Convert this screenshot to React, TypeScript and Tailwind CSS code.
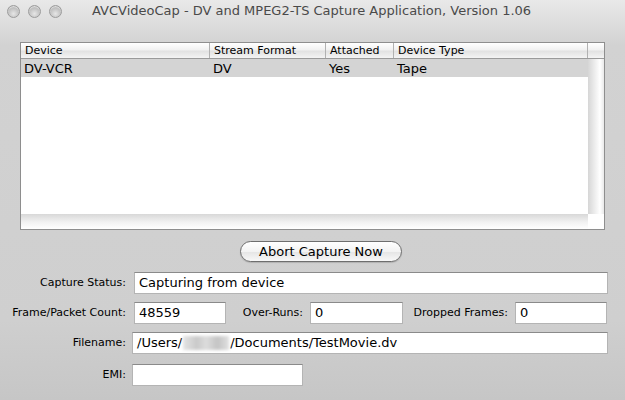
import type { ReactNode } from "react";

const font = "font-['Lucida_Grande','DejaVu_Sans',sans-serif]";

function Light() {
  return (
    <span className="w-[13px] h-[13px] rounded-full border border-[#9c9c9c] bg-[radial-gradient(circle_at_50%_70%,#e6e6e6_0%,#c2c2c2_55%,#a9a9a9_100%)] shadow-[inset_0_1px_1px_rgba(255,255,255,0.6)]" />
  );
}

function Field({ children, className }: { children?: ReactNode; className: string }) {
  return (
    <div
      className={`h-[22px] bg-white border border-[#b4b4b4] border-t-[#8a8a8a] flex items-center px-[4px] text-[13px] text-black whitespace-nowrap ${className}`}
    >
      {children}
    </div>
  );
}

const header = [
  { label: "Device", w: "w-[189px]" },
  { label: "Stream Format", w: "w-[116px]" },
  { label: "Attached", w: "w-[68px]" },
  { label: "Device Type", w: "w-[194px]" },
];

export default function App() {
  return (
    <div
      className={`w-[625px] h-[400px] overflow-hidden bg-[linear-gradient(to_bottom,#e9e9e9_0px,#d2d2d2_45px,#cfcfcf_320px,#c6c6c6_400px)] ${font} text-black`}
    >
      {/* Title bar */}
      <div className="h-[22px] flex items-center">
        <div className="flex gap-[8px] pl-[7px]">
          <Light />
          <Light />
          <Light />
        </div>
        <span className="ml-[30px] text-[13px] text-[#4a4a4a] whitespace-nowrap">
          AVCVideoCap - DV and MPEG2-TS Capture Application, Version 1.06
        </span>
      </div>

      {/* Device table */}
      <div className="ml-[20px] mt-[20px] w-[585px] h-[188px] border border-[#8e8e8e] bg-white flex flex-col">
        <div className="h-[16px] flex border-b border-[#9a9a9a] bg-[linear-gradient(to_bottom,#ffffff,#f1f1f1_45%,#e2e2e2_55%,#f4f4f4)]">
          {header.map((h) => (
            <div
              key={h.label}
              className={`${h.w} border-r border-[#b1b1b1] pl-[4px] text-[11px] leading-[15px] whitespace-nowrap`}
            >
              {h.label}
            </div>
          ))}
          <div className="flex-1" />
        </div>
        <div className="flex flex-1">
          <div className="flex-1 flex flex-col">
            <div className="h-[18px] flex bg-[#d4d4d4] text-[13px] leading-[19px]">
              <div className="w-[189px] pl-[3px]">DV-VCR</div>
              <div className="w-[116px] pl-[3px]">DV</div>
              <div className="w-[68px] pl-[3px]">Yes</div>
              <div className="pl-[3px]">Tape</div>
            </div>
          </div>
          <div className="w-[16px] bg-[linear-gradient(to_right,#d6d6d6,#f4f4f4_55%,#ffffff_75%,#e9e9e9)]" />
        </div>
        <div className="h-[15px] flex">
          <div className="flex-1 bg-[linear-gradient(to_bottom,#d8d8d8,#f2f2f2_55%,#ffffff)]" />
          <div className="w-[16px] bg-white" />
        </div>
      </div>

      {/* Button */}
      <div className="mt-[9px] ml-[240px]">
        <button className="w-[162px] h-[21px] rounded-full border border-[#6e6e6e] bg-[linear-gradient(to_bottom,#ffffff,#f3f3f3_50%,#e6e6e6_55%,#f8f8f8)] text-[13px] leading-[19px] text-black shadow-[0_1px_1px_rgba(0,0,0,0.15)]">
          Abort Capture Now
        </button>
      </div>

      {/* Form */}
      <div className="mt-[9px] flex flex-col gap-[8px] text-[11px]">
        <div className="flex items-center">
          <span className="w-[127px] text-right pr-[1px]">Capture Status:</span>
          <Field className="ml-[7px] w-[474px]">Capturing from device</Field>
        </div>
        <div className="flex items-center">
          <span className="w-[127px] text-right pr-[1px]">Frame/Packet Count:</span>
          <Field className="ml-[7px] w-[92px]">48559</Field>
          <span className="w-[77px] text-right">Over-Runs:</span>
          <Field className="ml-[7px] w-[93px]">0</Field>
          <span className="w-[105px] text-right">Dropped Frames:</span>
          <Field className="ml-[7px] w-[92px]">0</Field>
        </div>
        <div className="flex items-center">
          <span className="w-[126px] text-right">Filename:</span>
          <Field className="ml-[6px] w-[476px]">
            /Users/
            <span className="inline-block w-[46px] h-[14px] mx-[1px] bg-[linear-gradient(to_right,#e4e4e4,#c9c9c9_30%,#dcdcdc_50%,#c4c4c4_75%,#e0e0e0)] blur-[1.5px]" />
            /Documents/TestMovie.dv
          </Field>
        </div>
        <div className="flex items-center mt-[2px]">
          <span className="w-[126px] text-right">EMI:</span>
          <Field className="ml-[6px] w-[171px]" />
        </div>
      </div>
    </div>
  );
}
